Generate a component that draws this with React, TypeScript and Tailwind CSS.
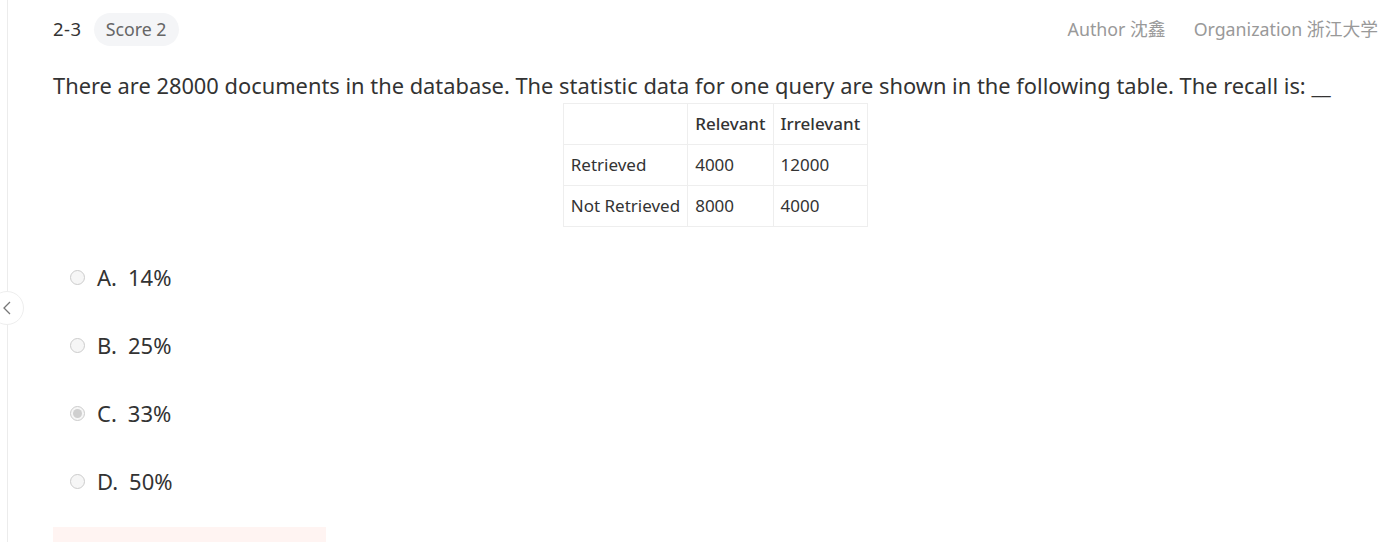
import React from 'react';

const options = [
  { key: 'A', text: '14%' },
  { key: 'B', text: '25%' },
  { key: 'C', text: '33%', checked: true },
  { key: 'D', text: '50%' },
];

const rows = [
  ['Retrieved', '4000', '12000'],
  ['Not Retrieved', '8000', '4000'],
];

export default function App() {
  return (
    <div className="relative h-[542px] w-[1378px] overflow-hidden bg-white font-['Noto_Sans','Noto_Sans_CJK_SC',sans-serif] text-[#333]">
      {/* left rail */}
      <div className="absolute left-[7px] top-0 h-full w-px bg-[#ececec]" />
      <button className="absolute left-[-10px] top-[291px] flex h-[34px] w-[34px] items-center justify-center rounded-full border border-[#eee] bg-white text-[#777]">
        <svg width="10" height="14" viewBox="0 0 10 14">
          <path d="M8 1 L2 7 L8 13" fill="none" stroke="currentColor" strokeWidth="1.3" />
        </svg>
      </button>

      <div className="pl-[53px]">
        {/* header */}
        <div className="flex h-[58px] items-center justify-between">
          <div className="flex items-center gap-[12px]">
            <span className="text-[18.5px] tracking-[0.5px] text-[#333]">2-3</span>
            <span className="flex h-[33px] items-center rounded-full bg-[#f4f5f7] px-[12px] text-[17.8px] text-[#666]">Score 2</span>
          </div>
          <div className="flex items-center gap-[28px] whitespace-nowrap text-[17.8px] text-[#999]">
            <span>Author 沈鑫</span>
            <span>Organization 浙江大学</span>
          </div>
        </div>

        {/* question */}
        <div className="mt-[12px] whitespace-nowrap text-[21.85px] leading-[32px] text-[#333]">
          There are 28000 documents in the database. The statistic data for one query are shown in the following table. The recall is: __
        </div>

        <div className="mt-px flex justify-center">
          <table className="border-collapse text-[17px]">
            <thead>
              <tr className="h-[41px]">
                <th className="border border-[#eee] px-[7px]" />
                <th className="border border-[#eee] px-[7px] text-left font-medium">Relevant</th>
                <th className="border border-[#eee] px-[7px] text-left font-medium">Irrelevant</th>
              </tr>
            </thead>
            <tbody>
              {rows.map((r) => (
                <tr key={r[0]} className="h-[41px]">
                  {r.map((c, i) => (
                    <td key={i} className="border border-[#eee] px-[7px]">{c}</td>
                  ))}
                </tr>
              ))}
            </tbody>
          </table>
        </div>

        {/* options */}
        <div className="mt-[35px] flex flex-col gap-[37px]">
          {options.map((o) => (
            <label key={o.key} className="flex h-[31px] items-center pl-[17px] text-[22px]">
              <span className="flex h-[15px] w-[15px] items-center justify-center rounded-full border border-[#ccc] bg-[#f6f6f6]">
                {o.checked && <span className="h-[9px] w-[9px] rounded-full bg-[#cfcfcf]" />}
              </span>
              <span className="ml-[12px]">{o.key}.</span>
              <span className="ml-[11px]">{o.text}</span>
            </label>
          ))}
        </div>

        <div className="mt-[30px] h-[30px] w-[273px] bg-[#fff4f2]" />
      </div>
    </div>
  );
}
